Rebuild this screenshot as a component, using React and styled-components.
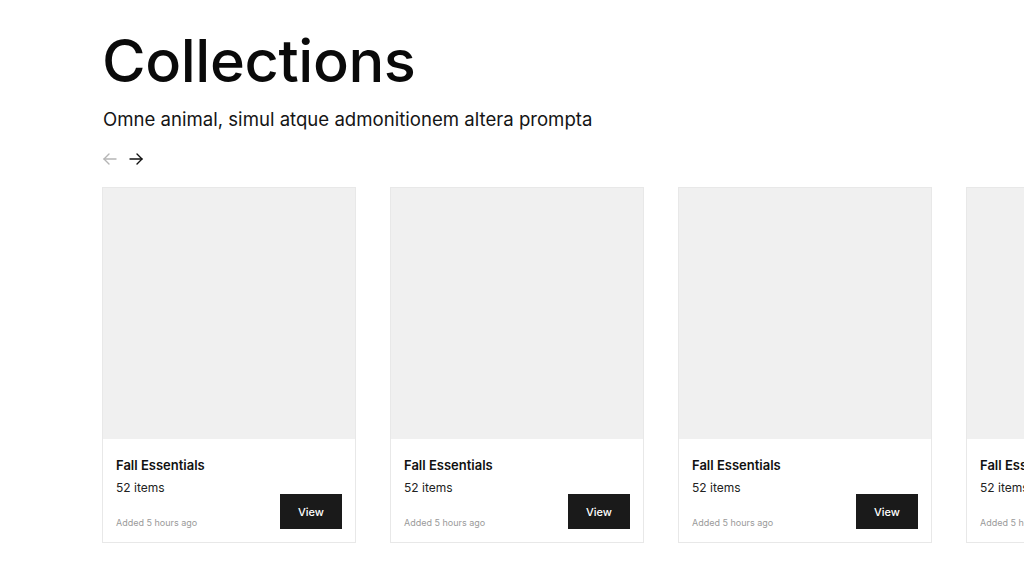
import React from "react";
import styled, { createGlobalStyle } from "styled-components";

const GlobalStyle = createGlobalStyle`
  html, body {
    margin: 0;
    padding: 0;
    background: #ffffff;
    font-family: Inter, "Liberation Sans", sans-serif;
    color: #111111;
    overflow: hidden;
  }
`;

const Page = styled.div`
  width: 1024px;
  height: 586px;
  padding: 25px 0 0 102px;
  box-sizing: border-box;
  overflow: hidden;
`;

const Title = styled.h1`
  margin: 0;
  font-size: 59.5px;
  font-weight: 500;
  letter-spacing: -0.4px;
  line-height: 70px;
  color: #0a0a0a;
`;

const Subtitle = styled.p`
  margin: 12px 0 0 1px;
  font-size: 18.6px;
  line-height: 24px;
  color: #151515;
`;

const Arrows = styled.div`
  display: flex;
  gap: 12px;
  margin: 20px 0 0 1px;
  height: 16px;
`;

const ArrowButton = styled.button`
  border: 0;
  background: none;
  padding: 0;
  width: 14px;
  height: 16px;
  display: flex;
  align-items: center;
  color: ${(p) => (p.disabled ? "#b5b5b5" : "#111111")};
  cursor: pointer;
`;

const Track = styled.div`
  display: flex;
  gap: 34px;
  margin-top: 20px;
`;

const Card = styled.div`
  flex: 0 0 254px;
  border: 1px solid #e8e8e8;
  box-sizing: border-box;
  display: flex;
  flex-direction: column;
`;

const Thumb = styled.div`
  height: 251px;
  background: #f0f0f0;
`;

const Body = styled.div`
  padding: 18px 13px 13px 13px;
  display: flex;
  justify-content: space-between;
  align-items: flex-end;
`;

const Info = styled.div`
  display: flex;
  flex-direction: column;
`;

const Name = styled.div`
  font-size: 13px;
  font-weight: 600;
  line-height: 16px;
  color: #111111;
`;

const Count = styled.div`
  margin-top: 7px;
  font-size: 12px;
  line-height: 16px;
  color: #222222;
`;

const Added = styled.div`
  margin-top: 21px;
  font-size: 9px;
  line-height: 12px;
  color: #9a9a9a;
`;

const ViewButton = styled.button`
  width: 62px;
  height: 35px;
  border: 0;
  background: #1a1a1a;
  color: #ffffff;
  font-family: inherit;
  font-size: 11px;
  font-weight: 500;
  cursor: pointer;
`;

const Arrow = ({ dir }) => (
  <svg width="14" height="12" viewBox="0 0 14 12" fill="none" stroke="currentColor" strokeWidth="1.4" strokeLinecap="round" strokeLinejoin="round">
    {dir === "left" ? (
      <>
        <path d="M13 6H1" />
        <path d="M6 1L1 6l5 5" />
      </>
    ) : (
      <>
        <path d="M1 6h12" />
        <path d="M8 1l5 5-5 5" />
      </>
    )}
  </svg>
);

const cards = [1, 2, 3, 4];

export default function App() {
  return (
    <Page>
      <GlobalStyle />
      <Title>Collections</Title>
      <Subtitle>Omne animal, simul atque admonitionem altera prompta</Subtitle>
      <Arrows>
        <ArrowButton disabled>
          <Arrow dir="left" />
        </ArrowButton>
        <ArrowButton>
          <Arrow dir="right" />
        </ArrowButton>
      </Arrows>
      <Track>
        {cards.map((c) => (
          <Card key={c}>
            <Thumb />
            <Body>
              <Info>
                <Name>Fall Essentials</Name>
                <Count>52 items</Count>
                <Added>Added 5 hours ago</Added>
              </Info>
              <ViewButton>View</ViewButton>
            </Body>
          </Card>
        ))}
      </Track>
    </Page>
  );
}
